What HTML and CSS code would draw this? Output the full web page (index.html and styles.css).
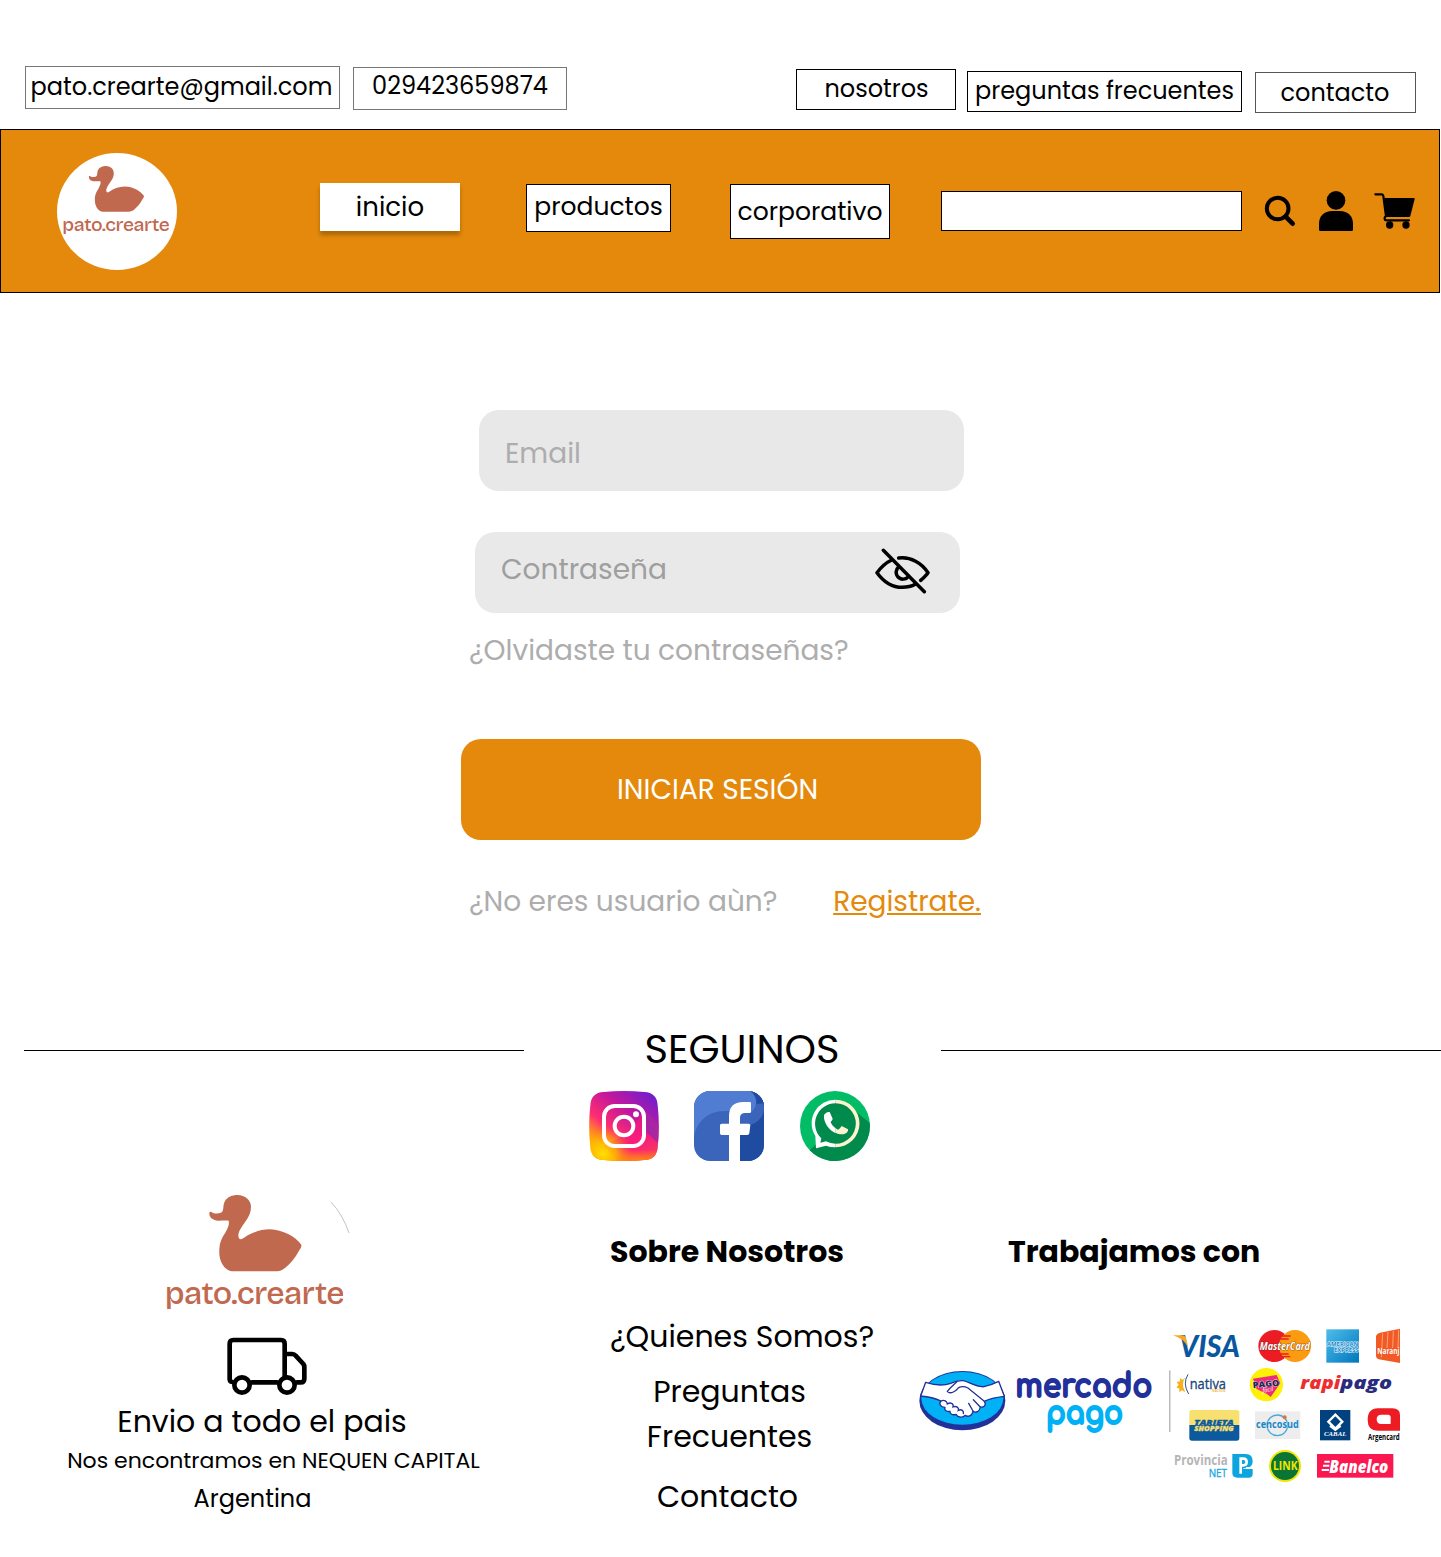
FILE: index.html
```html
<!DOCTYPE html>
<html lang="es">
<head>
<meta charset="utf-8">
<title>pato.crearte</title>
<link rel="stylesheet" href="styles.css">
</head>
<body>
<svg class="sprite" aria-hidden="true">
  <symbol id="logo" viewBox="48 44 532 346">
    <path fill="#c1694f" d="M178 97C180 92 185 95 189 98C200 101 213 100 218 92C222 82 218 75 225 62C232 50 247 44 262 44C286 44 303 59 303 80C303 96 297 108 290 118C280 133 268 147 265 163C265 172 268 178 273 177C283 173 290 166 301 161C320 152 338 147 360 147C398 148 436 169 454 193C455 199 452 204 447 211C436 232 422 249 406 262C397 269 390 273 376 273L250 273C235 273 225 265 217 252C209 238 207 224 208 205C209 186 216 172 225 159C233 145 239 132 236 121C228 120 218 121 205 121C188 120 177 112 178 97Z"/>
    <text class="logo-text" x="44" y="371" textLength="538" lengthAdjust="spacingAndGlyphs">pato.crearte</text>
  </symbol>
</svg>

<header>
  <div class="topbar">
    <a class="chip chip-mail">pato.crearte@gmail.com</a>
    <a class="chip chip-phone">029423659874</a>
    <a class="chip chip-about">nosotros</a>
    <a class="chip chip-faq">preguntas frecuentes</a>
    <a class="chip chip-contact">contacto</a>
  </div>
  <nav class="navbar">
    <a class="brand"><svg width="106" height="69"><use href="#logo"/></svg></a>
    <a class="tab tab-home">inicio</a>
    <a class="tab tab-products">productos</a>
    <a class="tab tab-corporate">corporativo</a>
    <div class="search"></div>
    <svg class="nav-icons" width="160" height="50" viewBox="30 15 480 150">
      <circle cx="83" cy="85.500" r="32.500" fill="none" stroke="#000" stroke-width="12"/>
      <path d="M107 110L128 131" stroke="#000" stroke-width="14" stroke-linecap="round"/>
      <circle cx="258" cy="61" r="28"/>
      <path d="M207 149V131C207 108 223 93 246 93H270C293 93 309 108 309 131V149Q309 153 305 153H211Q207 153 207 149Z"/>
      <path d="M376 43H396Q399 43 400 48L408 109C402 112 402 120 409 121H477" fill="none" stroke="#000" stroke-width="6.500" stroke-linecap="round" stroke-linejoin="round"/>
      <path d="M402 54H492Q494 54 494 57L481 108Q480 111 477 111H410Z"/>
      <circle cx="419" cy="135" r="11"/><circle cx="468" cy="135" r="11"/>
    </svg>
  </nav>
</header>

<main class="login">
  <div class="field field-email">Email</div>
  <div class="field field-password">
    <span>Contraseña</span>
    <svg width="56" height="48" viewBox="45 50 168 144" fill="none" stroke="#000" stroke-width="10.500" stroke-linecap="round" stroke-linejoin="round">
      <path d="M70 60L193 184M95 89C78 97 62 112 51 127C69 152 96 171 127 171C142 171 155 168 166 162M116 83C152 78 186 99 204 127C198 136 190 143 182 150M117 109C107 117 106 131 113 139C121 149 138 149 145 138"/>
    </svg>
  </div>
  <a class="forgot">¿Olvidaste tu contraseñas?</a>
  <button class="submit">INICIAR SESIÓN</button>
  <p class="signup"><span>¿No eres usuario aùn?</span><a class="register">Registrate.</a></p>
</main>

<section class="follow">
  <div class="follow-title">
    <hr><h2>SEGUINOS</h2><hr>
  </div>
  <div class="social">
    <svg width="70" height="70" viewBox="42 33 210 210">
      <defs>
        <linearGradient id="ig" x1="0.100" y1="1" x2="0.900" y2="0"><stop offset="0" stop-color="#ffd800"/><stop offset=".16" stop-color="#ffb800"/><stop offset=".38" stop-color="#ff2d72"/><stop offset=".65" stop-color="#c4189b"/><stop offset="1" stop-color="#6a1ed2"/></linearGradient>
        <radialGradient id="igy" cx=".2" cy=".9" r=".42"><stop offset="0" stop-color="#ffe000"/><stop offset=".45" stop-color="#ffb900" stop-opacity=".8"/><stop offset="1" stop-color="#ff6a2a" stop-opacity="0"/></radialGradient>
        <linearGradient id="igs" x1="0" y1="0" x2="1" y2="1"><stop offset="0" stop-color="#d0208a"/><stop offset=".6" stop-color="#ff1879"/><stop offset="1" stop-color="#ff4a4a"/></linearGradient>
        <linearGradient id="igb" x1="0" y1="0" x2="0" y2="1"><stop offset=".84" stop-color="#ff8a10" stop-opacity="0"/><stop offset="1" stop-color="#ff8a10"/></linearGradient>
      </defs>
      <path fill="url(#ig)" d="M86 36Q147 30 208 36Q246 38 248 76Q255 138 248 200Q246 238 208 240Q147 246 86 240Q48 238 46 200Q39 138 46 76Q48 38 86 36Z"/>
      <path fill="url(#igs)" opacity=".75" d="M208 92L250 134Q252 170 248 200Q246 238 208 240Q165 244 125 242L86 197L140 170L180 130Z"/>
      <path fill="#8b2bb0" opacity=".7" d="M208 92L250 134Q250 160 249 190L212 155Z"/>
      <path fill="url(#igb)" d="M86 36Q147 30 208 36Q246 38 248 76Q255 138 248 200Q246 238 208 240Q147 246 86 240Q48 238 46 200Q39 138 46 76Q48 38 86 36Z"/>
      <path fill="url(#igy)" d="M86 36Q147 30 208 36Q246 38 248 76Q255 138 248 200Q246 238 208 240Q147 246 86 240Q48 238 46 200Q39 138 46 76Q48 38 86 36Z"/>
      <rect x="87" y="78" width="120" height="120" rx="32" fill="none" stroke="#fff" stroke-width="12"/>
      <circle cx="147" cy="138" r="28" fill="none" stroke="#fff" stroke-width="12"/>
      <circle cx="183" cy="103" r="9" fill="#fff"/>
    </svg>
    <svg width="70" height="70" viewBox="357 33 210 210">
      <defs><clipPath id="fbc"><rect x="357" y="33" width="210" height="210" rx="48"/></clipPath></defs>
      <g clip-path="url(#fbc)">
        <rect x="357" y="33" width="210" height="210" fill="#3a65ba"/>
        <path fill="#507dd2" d="M357 172C363 128 398 92 450 93H520L545 70C545 55 540 45 528 33H357Z"/>
        <path fill="#1f4ba0" d="M528 38C548 60 550 80 535 105L524 135L495 165V243H567V33H528Z"/>
        <path fill="#3a65ba" d="M546 70C545 88 535 97 524 101V135C548 128 563 112 567 90V60Q560 45 540 45Z"/>
        <path fill="#1f4ba0" d="M528 33C540 42 546 55 545 72L567 105V33Z"/>
        <path fill="#3a65ba" d="M545 72C543 90 533 98 524 100V135C548 128 563 112 567 90V70Z"/>
        <path fill="#507dd2" d="M526 33C547 48 551 80 526 98Z"/>
      </g>
      <path fill="#fff" d="M462 243V165H440Q435 165 435 160V136Q435 131 440 131H462V109Q462 66 505 66H524Q528 66 528 70V95Q528 99 524 99H511Q495 99 495 113V131H521Q526 131 526 136L523 160Q522 165 517 165H495V243Z"/>
    </svg>
    <svg class="whatsapp" width="70" height="70" viewBox="675 33 210 210">
      <circle cx="780" cy="138" r="105" fill="#02bc66"/>
      <path fill="#008a4b" d="M832 87L884 128A105 105 0 0 1 704 211L727 190Z"/>
      <circle cx="782" cy="131" r="66" fill="#008a4b"/>
      <path fill="#fff" d="M782 59A71 71 0 0 0 721 168L723 205L753 197A71 71 0 0 0 782 202V191A61 61 0 0 1 753 184L736 188L739 175A61 61 0 0 1 782 70Z"/>
      <path fill="#fff3cf" d="M782 59A71.500 71.500 0 0 1 782 202V191A60.500 60.500 0 0 0 782 70Z"/>
      <path fill="#fff" d="M747 105C752 97 758 95 764 96L773 116C773 121 767 123 767 127C770 134 776 141 782 145V160C765 152 744 129 747 105Z"/>
      <path fill="#fff3cf" d="M782 145L789 149C794 148 797 141 800 138L819 148C820 155 815 163 801 163C794 163 787 161 782 158Z"/>
    </svg>
  </div>
</section>

<footer class="footer">
  <div class="col-brand">
    <div class="brand-row">
      <svg width="178" height="116" viewBox="48 44 534 348"><use href="#logo" x="48" y="44" width="532" height="346"/></svg>
      <svg class="arc" width="22" height="36" viewBox="0 0 22 36"><path d="M1 2Q13 15 19 33" fill="none" stroke="#999" stroke-width=".6"/></svg>
    </div>
    <svg class="truck" width="80" height="58" viewBox="231 471 240 174" fill="none" stroke="#000" stroke-width="14" stroke-linecap="round" stroke-linejoin="round">
      <path d="M247 606Q239 605 239 597V491Q239 480 250 480H393Q404 480 404 491V588M306 607H381M411 522H427Q433 522 437 527L460 552Q463 556 463 561V596Q463 607 452 607H441"/>
      <circle cx="276" cy="615" r="23"/><circle cx="411" cy="615" r="23"/>
    </svg>
    <p class="ship">Envio a todo el pais</p>
    <p class="city">Nos encontramos en NEQUEN CAPITAL</p>
    <p class="country">Argentina</p>
  </div>
  <div class="col-about">
    <h3>Sobre Nosotros</h3>
    <a class="who">¿Quienes Somos?</a>
    <a class="faq">Preguntas<br>Frecuentes</a>
    <a class="contact">Contacto</a>
  </div>
  <div class="col-pay">
    <h3>Trabajamos con</h3>
    <div class="pay-row">
      <svg class="mp" width="250" height="100" viewBox="0 0 750 300">
        <ellipse cx="157" cy="152" rx="129" ry="89" fill="#22309a"/>
        <ellipse cx="157" cy="145" rx="123" ry="79" fill="#00b1f5"/>
        <path fill="#fff" stroke="#22309a" stroke-width="4" stroke-linejoin="round" d="M32 138L47 97C75 106 100 108 122 100C134 94 146 91 160 92C178 96 198 112 222 110C240 106 254 100 266 94L283 139C256 142 240 145 223 154C230 165 222 173 211 171C209 185 198 189 189 184C186 198 174 202 165 196C160 204 143 203 138 193C128 197 119 191 120 184C109 186 101 179 105 172C92 172 85 161 93 153C74 144 54 140 32 138Z"/>
        <path fill="none" stroke="#22309a" stroke-width="4" stroke-linecap="round" d="M140 96C130 105 120 114 112 124C120 134 137 125 146 113C155 108 166 110 174 114L222 153M190 149L210 170M176 160L189 183M93 153C103 148 111 154 112 162C121 156 132 160 129 171C139 167 148 173 145 181C155 176 162 183 160 191"/>
        <g class="mp-name">
          <text x="316" y="141" fill="#22309a" stroke="#22309a" textLength="411" lengthAdjust="spacingAndGlyphs">mercado</text>
          <text x="408" y="222" fill="#00b1f5" stroke="#00b1f5" textLength="231" lengthAdjust="spacingAndGlyphs">pago</text>
        </g>
      </svg>
      <svg class="cards" width="240" height="170" viewBox="0 0 720 510">
        <path d="M29.500 151V336" stroke="#999" stroke-width="3"/>
        <text class="visa" x="58" y="111" fill="#0a56a0" textLength="182" lengthAdjust="spacingAndGlyphs">VISA</text>
        <path fill="#f7a823" d="M39 46H67Q77 47 79 58L84 82Q71 55 39 46Z"/>
        <circle cx="343" cy="78" r="48" fill="#ec1c24"/><circle cx="405" cy="78" r="48" fill="#fb9b12"/>
        <path d="M366 48H392M361 57H386M359 102H386M364 110H391" stroke="#ec1c24" stroke-width="4"/>
        <text x="299" y="89" font-weight="700" font-style="italic" font-size="32" fill="#fff" stroke="#5a1a10" stroke-width="2" paint-order="stroke" textLength="151" lengthAdjust="spacingAndGlyphs">MasterCard</text>
        <defs><linearGradient id="amex" x1="0" y1="0" x2="1" y2="1"><stop offset="0" stop-color="#4dbdea"/><stop offset="1" stop-color="#0077bd"/></linearGradient></defs>
        <rect x="499" y="28" width="98" height="100" fill="url(#amex)"/>
        <g font-weight="700" fill="#1686c8" stroke="#e8f7ff" stroke-width="3" paint-order="stroke" font-size="17">
          <text x="501" y="77" textLength="94" lengthAdjust="spacingAndGlyphs">AMERICAN</text>
          <text x="522" y="96" textLength="74" lengthAdjust="spacingAndGlyphs">EXPRESS</text>
        </g>
        <path fill="#f15a24" d="M648 48Q650 40 660 38L720 26V129L656 118Q648 116 648 108Z"/>
        <path d="M668 40L664 112M684 36L681 84M700 33L698 84M716 30L714 84" stroke="#ffb08b" stroke-width="2.500"/>
        <text x="652" y="103" font-weight="700" font-size="24" fill="#fff" textLength="66" lengthAdjust="spacingAndGlyphs">Naranj</text>

        <path fill="#f9b01f" d="M76 172Q62 193 76 217L66 211L58 217V206L49 202L56 195L50 186L60 184L60 174L68 180Z"/>
        <path d="M84 163Q67 191 86 222" fill="none" stroke="#27568c" stroke-width="3"/>
        <text x="89" y="207" font-size="43" fill="#17457e" stroke="#17457e" textLength="109" lengthAdjust="spacingAndGlyphs">nativa</text>
        <text x="156" y="217" font-weight="700" font-size="9" fill="#f4b73c" textLength="40">NACIÓN</text>
        <circle cx="319" cy="194" r="50" fill="#fdf006"/>
        <path fill="#ee2a7b" d="M279 176L350 165L361 190L332 231L322 223L290 207Z"/>
        <text x="278" y="201" transform="rotate(-5 318 190)" font-weight="800" font-size="26" fill="#24264f" stroke="#fff" stroke-width="2" paint-order="stroke" textLength="80" lengthAdjust="spacingAndGlyphs">PAGO</text>
        <text x="307" y="216" transform="rotate(-10 320 212)" font-style="italic" font-size="18" fill="#fff">fácil</text>
        <g font-weight="800" font-style="italic" font-size="52">
          <text x="421" y="208" fill="#ee2e2e" textLength="120" lengthAdjust="spacingAndGlyphs">rapi</text>
          <text x="541" y="208" fill="#2a2b7c" textLength="155" lengthAdjust="spacingAndGlyphs">pago</text>
        </g>

        <path fill="#f7df70" d="M96 270H230Q238 270 238 278V315H88V278Q88 270 96 270Z"/>
        <path fill="#0a5a9d" d="M88 315H238V354Q238 362 230 362H96Q88 362 88 354Z"/>
        <g font-weight="800" font-style="italic" font-size="21">
          <text x="103" y="314" fill="#0a5a9d" stroke="#0a5a9d" textLength="118" lengthAdjust="spacingAndGlyphs">TARJETA</text>
          <text x="103" y="333" fill="#f7df70" stroke="#f7df70" textLength="118" lengthAdjust="spacingAndGlyphs">SHOPPING</text>
        </g>
        <rect x="285" y="274" width="136" height="83" fill="#ededed"/>
        <circle cx="352" cy="316" r="31" fill="none" stroke="#4ba8d8" stroke-width="4"/>
        <circle cx="374" cy="292" r="6" fill="#e2703a"/>
        <text x="288" y="323" font-weight="700" font-size="29" fill="#1687c5" stroke="#ededed" stroke-width="2" paint-order="stroke" textLength="128" lengthAdjust="spacingAndGlyphs">cencosud</text>
        <rect x="480" y="270" width="91" height="91" fill="#00417e"/>
        <path d="M526 284L547 305L526 326L505 305Z" fill="none" stroke="#fff" stroke-width="7"/><path fill="#fff" d="M512 314L526 322L540 314L544 320L526 334L508 320Z"/>
        <text class="serif" x="492" y="349" font-weight="700" font-style="italic" font-size="21" fill="#fff" textLength="67" lengthAdjust="spacingAndGlyphs">CABAL</text>
        <path fill="#ed1c24" fill-rule="evenodd" d="M654 265H697Q720 265 720 285V332H653Q623 332 623 300Q623 265 654 265ZM664 284Q650 284 650 298Q650 312 664 312H692V292Q692 284 684 284Z"/>
        <text x="624" y="360" font-weight="700" font-size="24" textLength="95" lengthAdjust="spacingAndGlyphs">Argencard</text>

        <text x="42" y="436" font-weight="700" font-size="42" fill="#b5b5b5" textLength="161" lengthAdjust="spacingAndGlyphs">Provincia</text>
        <text x="146" y="471" font-size="33" fill="#19a9e1" stroke="#19a9e1" textLength="55" lengthAdjust="spacingAndGlyphs">NET</text>
        <path fill="#0da5de" d="M217 402H239V441Q239 446 244 446H278V462Q278 473 266 473H232Q217 473 217 459Z"/>
        <path fill="#0da5de" d="M239 402H257Q278 402 278 424Q278 444 257 444H250V459H234V402Z"/>
        <path fill="none" stroke="#fff" stroke-width="8" d="M242 461V416H250Q260 416 260 426Q260 436 250 436H242"/>
        <path fill="#fff" d="M258 441H280V447H258Z"/>
        <circle cx="375" cy="438" r="48" fill="#f2e500"/><circle cx="375" cy="438" r="42" fill="#0a7535"/>
        <text x="339" y="451" font-weight="700" font-size="36" fill="#f2e500" textLength="74" lengthAdjust="spacingAndGlyphs">LINK</text>
        <rect x="471" y="402" width="229" height="71" fill="#fb1851"/>
        <path d="M493 425H509M489 437H508M485 450H507" stroke="#fff" stroke-width="6"/>
        <text x="508" y="458" font-weight="800" font-style="italic" font-size="52" fill="#fff" textLength="177" lengthAdjust="spacingAndGlyphs">Banelco</text>
      </svg>
    </div>
  </div>
</footer>
</body>
</html>
```
FILE: styles.css
```css
* { box-sizing: border-box; }
body {
  margin: 0;
  width: 1441px;
  height: 1557px;
  overflow-x: hidden;
  background: #fff;
  color: #000;
  font-family: Poppins, Inter, sans-serif;
  font-size: 24px;
}
h2, h3, p, hr { margin: 0; font-weight: 400; }
span, a, h2, h3, p { white-space: nowrap; }
svg { display: block; flex: none; }
.sprite { position: absolute; width: 0; height: 0; }
.logo-text { font: 500 94px "Bricolage Grotesque", Inter, sans-serif; letter-spacing: -2px; fill: #c1694f; }

.topbar { display: flex; align-items: flex-start; height: 129px; padding: 66px 0 0 25px; }
.chip { flex: none; display: flex; justify-content: center; border: 1px solid #000; line-height: 40px; height: 41px; }
.chip-mail { width: 315px; height: 43px; padding-right: 2px; border-color: #777; }
.chip-phone { width: 214px; height: 43px; margin: 1px 0 0 13px; border-color: #777; line-height: 36px; }
.chip-about { width: 160px; margin: 3px 0 0 229px; line-height: 37px; padding-left: 1px; }
.chip-faq { width: 275px; margin: 5px 0 0 11px; line-height: 38px; }
.chip-contact { width: 161px; margin: 6px 0 0 13px; padding-right: 1px; border-color: #555; }

.navbar { display: flex; align-items: flex-start; width: 1440px; height: 164px; background: #e4890b; border: 1px solid #000; }
.brand { flex: none; width: 120px; height: 117px; margin: 23px 0 0 56px; padding: 13px 0 0 6px; border-radius: 50%; background: #fff; }
.tab { flex: none; display: flex; justify-content: center; background: #fff; border: 1px solid #000; font-size: 25px; }
.tab-home { width: 140px; height: 48px; margin: 53px 0 0 143px; border: 0; font-size: 26px; line-height: 48px; box-shadow: 0 4px 4px rgba(0,0,0,.25); }
.tab-products { width: 145px; height: 48px; margin: 54px 0 0 66px; line-height: 44px; }
.tab-corporate { width: 160px; height: 55px; margin: 54px 0 0 59px; line-height: 54px; }
.search { flex: none; width: 301px; height: 40px; margin: 61px 0 0 51px; background: #fff; border: 1px solid #000; }
.nav-icons { margin: 55px 0 0 18px; }

.login { display: flex; flex-direction: column; align-items: flex-start; width: 520px; height: 727px; margin-left: 461px; padding-top: 117px; color: #adadad; font-size: 28px; }
.field { display: flex; justify-content: space-between; width: 485px; height: 81px; border-radius: 20px; background: #e8e8e8; padding-left: 26px; line-height: 88px; }
.field-email { margin-left: 18px; }
.field-password { margin: 41px 0 0 14px; background: #e9e9e9; color: #9f9f9f; line-height: 76px; }
.field-password svg { margin: 15px 29px 0 0; }
.forgot { margin: 18px 0 0 8px; line-height: 40px; }
.submit { width: 520px; height: 101px; margin-top: 68px; padding: 0 7px 0 0; border: 0; border-radius: 20px; background: #e4890b; color: #fff; font: inherit; line-height: 101px; }
.signup { display: flex; justify-content: space-between; width: 512px; margin: 42px 0 0 8px; line-height: 40px; }
.register { color: #e4890b; text-decoration: underline; }

.follow { height: 175px; }
.follow-title { display: flex; align-items: center; height: 60px; padding-left: 24px; }
.follow-title hr { flex: none; width: 500px; height: 1px; border: 0; background: #000; }
.follow-title h2 { flex: 1; text-align: center; font-size: 40px; line-height: 58px; padding: 0 0 2px 19px; }
.social { display: flex; gap: 35px; margin: 11px 0 0 589px; }
.whatsapp { margin-left: 1px; }

.footer { display: flex; align-items: flex-start; font-size: 30px; }
.col-brand { display: flex; flex-direction: column; align-items: center; width: 526px; }
.brand-row { display: flex; width: 526px; padding-left: 166px; }
.arc { margin: 5px 0 0 -14px; }
.truck { margin: 26px 0 0 8px; }
.ship { line-height: 40px; margin-top: 7px; padding-right: 2px; }
.city { font-size: 22px; line-height: 32px; margin: 3px 0 0 21px; }
.country { font-size: 24px; line-height: 32px; margin: 6px 21px 0 0; }
.col-about { display: flex; flex-direction: column; width: 393px; padding: 37px 0 0 84px; align-items: flex-start; }
h3 { font-size: 30px; line-height: 40px; font-weight: 700; }
.who { margin-top: 45px; line-height: 40px; }
.faq { width: 239px; margin-top: 12px; line-height: 45px; text-align: center; }
.contact { width: 235px; margin-top: 18px; line-height: 40px; text-align: center; }
.col-pay { width: 522px; padding-top: 37px; }
.col-pay h3 { margin-left: 89px; }
.pay-row { display: flex; margin: 48px 0 0 -9px; }
.mp { margin-top: 30px; }
.mp-name { font: 700 98px Comfortaa, Inter, sans-serif; stroke-width: 6px; stroke-linejoin: round; }
.cards { font-family: "Open Sans", sans-serif; }
.cards .serif { font-family: "Liberation Serif", serif; }
.cards .visa { font: italic 900 90px Lato, "Open Sans", sans-serif; }
```
